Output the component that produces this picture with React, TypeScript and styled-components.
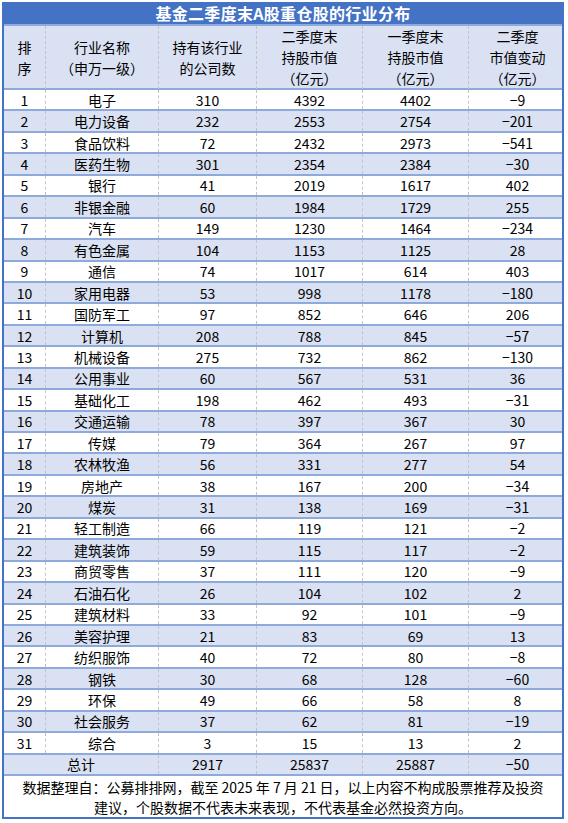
import React from "react";
import styled, { createGlobalStyle } from "styled-components";

const GlobalStyle = createGlobalStyle`
  html, body {
    margin: 0;
    padding: 0;
    background: #ffffff;
  }
  body {
    font-family: "Noto Sans CJK SC", "Noto Sans", sans-serif;
    color: #000;
  }
`;

const COLS = "42px 113px 98px 106px 106px 97px";

const Page = styled.div`
  padding: 2px 0 0 2px;
`;

const Table = styled.div`
  width: 562px;
  box-sizing: border-box;
  border-left: 2px solid #4472c4;
  border-right: 2px solid #4472c4;
  border-bottom: 2px solid #4472c4;
`;

const TitleBar = styled.div`
  height: 22px;
  background: #4472c4;
  color: #ffffff;
  font-size: 16px;
  font-weight: 700;
  display: flex;
  align-items: center;
  justify-content: center;
  letter-spacing: 0.3px;
`;

const HeaderRow = styled.div`
  display: grid;
  grid-template-columns: ${COLS};
  height: 66px;
  background: #d9e1f2;
  border-top: 2px solid #8ea9db;
  border-bottom: 2px solid #8ea9db;
  box-sizing: border-box;
`;

const HeaderCell = styled.div<{ $last?: boolean }>`
  display: flex;
  align-items: center;
  justify-content: center;
  text-align: center;
  font-size: 14px;
  line-height: 21px;
  border-right: ${(p) => (p.$last ? "none" : "1px dashed #c4c4c4")};
`;

const Row = styled.div<{ $alt?: boolean }>`
  display: grid;
  grid-template-columns: ${COLS};
  height: 21.44px;
  box-sizing: border-box;
  background: ${(p) => (p.$alt ? "#d9e1f2" : "#ffffff")};
  border-bottom: 2px solid #8ea9db;
`;

const Cell = styled.div<{ $last?: boolean; $span?: number }>`
  display: flex;
  align-items: center;
  justify-content: center;
  font-size: 14px;
  line-height: 1;
  grid-column: ${(p) => (p.$span ? `span ${p.$span}` : "auto")};
  border-right: ${(p) => (p.$last ? "none" : "1px dashed #c4c4c4")};
`;

const Footer = styled.div`
  height: 41px;
  display: flex;
  flex-direction: column;
  justify-content: center;
  align-items: center;
  text-align: center;
  font-size: 14px;
  line-height: 20px;
  white-space: nowrap;
`;

const rows: [string, number, number, number, number][] = [
  ["电子", 310, 4392, 4402, -9],
  ["电力设备", 232, 2553, 2754, -201],
  ["食品饮料", 72, 2432, 2973, -541],
  ["医药生物", 301, 2354, 2384, -30],
  ["银行", 41, 2019, 1617, 402],
  ["非银金融", 60, 1984, 1729, 255],
  ["汽车", 149, 1230, 1464, -234],
  ["有色金属", 104, 1153, 1125, 28],
  ["通信", 74, 1017, 614, 403],
  ["家用电器", 53, 998, 1178, -180],
  ["国防军工", 97, 852, 646, 206],
  ["计算机", 208, 788, 845, -57],
  ["机械设备", 275, 732, 862, -130],
  ["公用事业", 60, 567, 531, 36],
  ["基础化工", 198, 462, 493, -31],
  ["交通运输", 78, 397, 367, 30],
  ["传媒", 79, 364, 267, 97],
  ["农林牧渔", 56, 331, 277, 54],
  ["房地产", 38, 167, 200, -34],
  ["煤炭", 31, 138, 169, -31],
  ["轻工制造", 66, 119, 121, -2],
  ["建筑装饰", 59, 115, 117, -2],
  ["商贸零售", 37, 111, 120, -9],
  ["石油石化", 26, 104, 102, 2],
  ["建筑材料", 33, 92, 101, -9],
  ["美容护理", 21, 83, 69, 13],
  ["纺织服饰", 40, 72, 80, -8],
  ["钢铁", 30, 68, 128, -60],
  ["环保", 49, 66, 58, 8],
  ["社会服务", 37, 62, 81, -19],
  ["综合", 3, 15, 13, 2],
];

const headers: string[][] = [
  ["排", "序"],
  ["行业名称", "（申万一级）"],
  ["持有该行业", "的公司数"],
  ["二季度末", "持股市值", "（亿元）"],
  ["一季度末", "持股市值", "（亿元）"],
  ["二季度", "市值变动", "（亿元）"],
];

const fmt = (n: number) => (n < 0 ? `−${Math.abs(n)}` : `${n}`);

export default function App() {
  return (
    <Page>
      <GlobalStyle />
      <Table>
        <TitleBar>基金二季度末A股重仓股的行业分布</TitleBar>
        <HeaderRow>
          {headers.map((lines, i) => (
            <HeaderCell key={i} $last={i === headers.length - 1}>
              <div>
                {lines.map((l, j) => (
                  <div key={j}>{l}</div>
                ))}
              </div>
            </HeaderCell>
          ))}
        </HeaderRow>
        {rows.map((r, i) => (
          <Row key={i} $alt={i % 2 === 1}>
            <Cell>{i + 1}</Cell>
            <Cell>{r[0]}</Cell>
            <Cell>{r[1]}</Cell>
            <Cell>{r[2]}</Cell>
            <Cell>{r[3]}</Cell>
            <Cell $last>{fmt(r[4])}</Cell>
          </Row>
        ))}
        <Row $alt>
          <Cell $span={2}>总计</Cell>
          <Cell>2917</Cell>
          <Cell>25837</Cell>
          <Cell>25887</Cell>
          <Cell $last>{fmt(-50)}</Cell>
        </Row>
        <Footer>
          <div>数据整理自：公募排排网，截至 2025 年 7 月 21 日，以上内容不构成股票推荐及投资</div>
          <div>建议，个股数据不代表未来表现，不代表基金必然投资方向。</div>
        </Footer>
      </Table>
    </Page>
  );
}
